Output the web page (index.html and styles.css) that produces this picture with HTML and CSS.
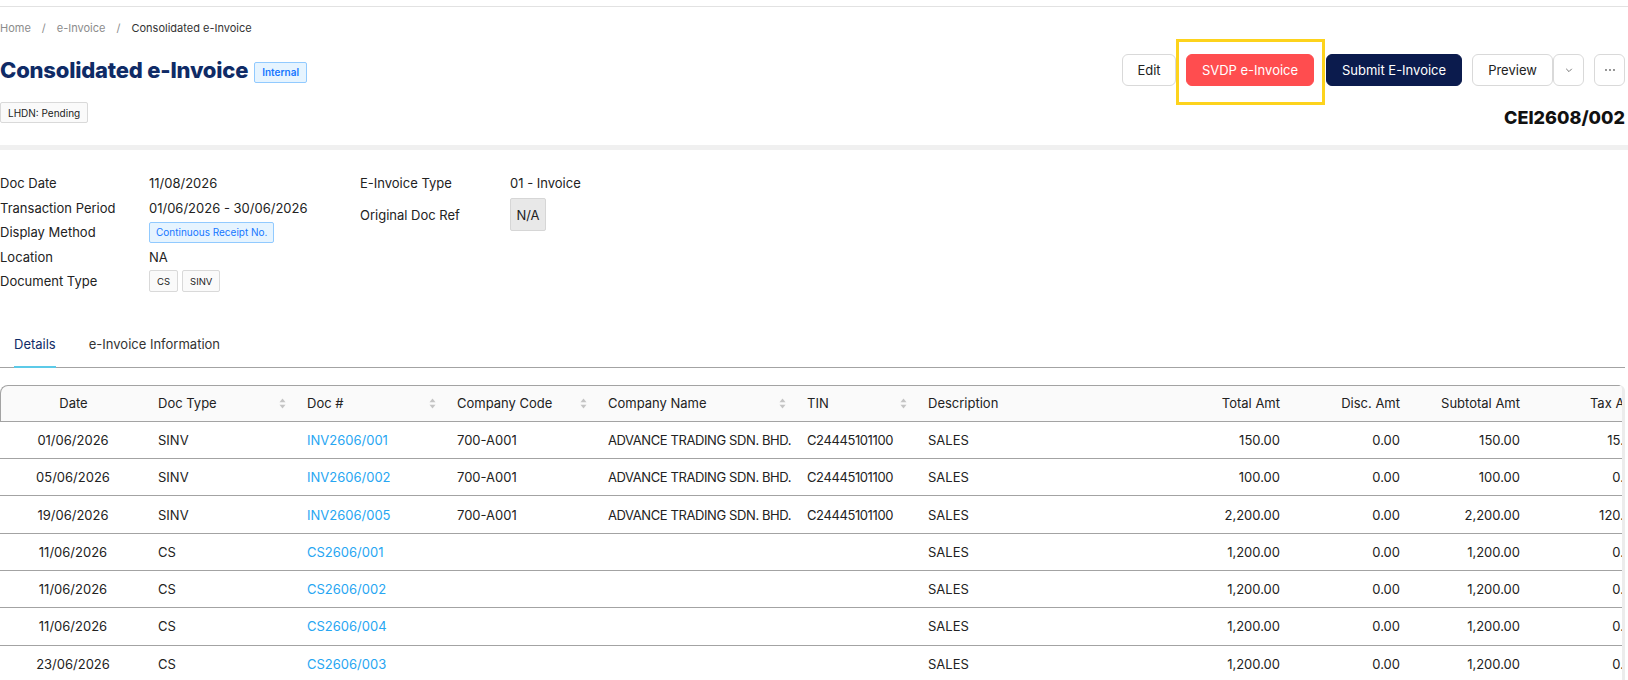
FILE: index.html
```html
<!DOCTYPE html>
<html>
<head>
    <meta charset="UTF-8">
    <title>Consolidated e-Invoice</title>
    <link rel="stylesheet" href="styles.css">
</head>
<body>
    <div class="topbar"></div>
    <div class="page">
        <div class="breadcrumb">
            <span>Home</span><span class="sep">/</span><span>e-Invoice</span><span class="sep">/</span><span class="current">Consolidated e-Invoice</span>
        </div>

        <div class="header">
            <div class="header-left">
                <div class="title-row">
                    <h1 class="title">Consolidated e-Invoice</h1>
                    <span class="tag tag-blue">Internal</span>
                </div>
                <span class="tag tag-gray status">LHDN: Pending</span>
            </div>
            <div class="header-right">
                <div class="actions">
                    <button class="btn btn-edit">Edit</button>
                    <button class="btn btn-danger highlight">SVDP e-Invoice</button>
                    <button class="btn btn-primary">Submit E-Invoice</button>
                    <div class="btn-group">
                        <button class="btn btn-preview">Preview</button>
                        <button class="btn btn-icon">
                            <svg width="10" height="10" viewBox="0 0 10 10"><polyline points="2.2,3.8 5,6.6 7.8,3.8" fill="none" stroke="#666" stroke-width="0.9"/></svg>
                        </button>
                    </div>
                    <button class="btn btn-icon btn-more">
                        <svg width="12" height="4" viewBox="0 0 12 4"><circle cx="2" cy="2" r="0.9" fill="#666"/><circle cx="6" cy="2" r="0.9" fill="#666"/><circle cx="10" cy="2" r="0.9" fill="#666"/></svg>
                    </button>
                </div>
                <div class="doc-no">CEI2608/002</div>
            </div>
        </div>
    </div>

    <div class="band"></div>

    <div class="page">
        <div class="info">
            <div class="info-col info-left">
                <div class="label">Doc Date</div><div class="value">11/08/2026</div>
                <div class="label">Transaction Period</div><div class="value">01/06/2026 - 30/06/2026</div>
                <div class="label">Display Method</div><div class="value"><span class="tag tag-blue tag-light">Continuous Receipt No.</span></div>
                <div class="label">Location</div><div class="value">NA</div>
                <div class="label">Document Type</div><div class="value"><span class="tag tag-gray tag-doc">CS</span><span class="tag tag-gray tag-doc">SINV</span></div>
            </div>
            <div class="info-col info-right">
                <div class="label">E-Invoice Type</div><div class="value">01 - Invoice</div>
                <div class="label">Original Doc Ref</div><div class="value"><span class="ref-box">N/A</span></div>
            </div>
        </div>

        <div class="tabs">
            <div class="tab active">Details</div>
            <div class="tab">e-Invoice Information</div>
        </div>

        <div class="table-wrap">
            <table class="grid">
                <colgroup>
                    <col style="width:146px"><col style="width:149px"><col style="width:150px"><col style="width:151px">
                    <col style="width:199px"><col style="width:121px"><col style="width:256px"><col style="width:120px">
                    <col style="width:120px"><col style="width:120px"><col style="width:120px">
                </colgroup>
                <thead>
                    <tr>
                        <th class="center">Date</th>
                        <th><div class="th-sort">Doc Type<svg width="7" height="11" viewBox="0 0 7 11"><path d="M3.5 0.5L6.5 4.2H0.5Z" fill="#c4c4c4"/><path d="M3.5 10.5L6.5 6.8H0.5Z" fill="#c4c4c4"/></svg></div></th>
                        <th><div class="th-sort">Doc #<svg width="7" height="11" viewBox="0 0 7 11"><path d="M3.5 0.5L6.5 4.2H0.5Z" fill="#c4c4c4"/><path d="M3.5 10.5L6.5 6.8H0.5Z" fill="#c4c4c4"/></svg></div></th>
                        <th><div class="th-sort">Company Code<svg width="7" height="11" viewBox="0 0 7 11"><path d="M3.5 0.5L6.5 4.2H0.5Z" fill="#c4c4c4"/><path d="M3.5 10.5L6.5 6.8H0.5Z" fill="#c4c4c4"/></svg></div></th>
                        <th><div class="th-sort">Company Name<svg width="7" height="11" viewBox="0 0 7 11"><path d="M3.5 0.5L6.5 4.2H0.5Z" fill="#c4c4c4"/><path d="M3.5 10.5L6.5 6.8H0.5Z" fill="#c4c4c4"/></svg></div></th>
                        <th><div class="th-sort">TIN<svg width="7" height="11" viewBox="0 0 7 11"><path d="M3.5 0.5L6.5 4.2H0.5Z" fill="#c4c4c4"/><path d="M3.5 10.5L6.5 6.8H0.5Z" fill="#c4c4c4"/></svg></div></th>
                        <th>Description</th>
                        <th class="num">Total Amt</th>
                        <th class="num">Disc. Amt</th>
                        <th class="num">Subtotal Amt</th>
                        <th class="num">Tax Amt</th>
                    </tr>
                </thead>
                <tbody>
                    <tr><td class="center">01/06/2026</td><td>SINV</td><td><a href="#">INV2606/001</a></td><td>700-A001</td><td class="caps">ADVANCE TRADING SDN. BHD.</td><td class="caps">C24445101100</td><td>SALES</td><td class="num">150.00</td><td class="num">0.00</td><td class="num">150.00</td><td class="num">15.00</td></tr>
                    <tr><td class="center">05/06/2026</td><td>SINV</td><td><a href="#">INV2606/002</a></td><td>700-A001</td><td class="caps">ADVANCE TRADING SDN. BHD.</td><td class="caps">C24445101100</td><td>SALES</td><td class="num">100.00</td><td class="num">0.00</td><td class="num">100.00</td><td class="num">0.00</td></tr>
                    <tr><td class="center">19/06/2026</td><td>SINV</td><td><a href="#">INV2606/005</a></td><td>700-A001</td><td class="caps">ADVANCE TRADING SDN. BHD.</td><td class="caps">C24445101100</td><td>SALES</td><td class="num">2,200.00</td><td class="num">0.00</td><td class="num">2,200.00</td><td class="num">120.00</td></tr>
                    <tr><td class="center">11/06/2026</td><td>CS</td><td><a href="#">CS2606/001</a></td><td></td><td></td><td></td><td>SALES</td><td class="num">1,200.00</td><td class="num">0.00</td><td class="num">1,200.00</td><td class="num">0.00</td></tr>
                    <tr><td class="center">11/06/2026</td><td>CS</td><td><a href="#">CS2606/002</a></td><td></td><td></td><td></td><td>SALES</td><td class="num">1,200.00</td><td class="num">0.00</td><td class="num">1,200.00</td><td class="num">0.00</td></tr>
                    <tr><td class="center">11/06/2026</td><td>CS</td><td><a href="#">CS2606/004</a></td><td></td><td></td><td></td><td>SALES</td><td class="num">1,200.00</td><td class="num">0.00</td><td class="num">1,200.00</td><td class="num">0.00</td></tr>
                    <tr><td class="center">23/06/2026</td><td>CS</td><td><a href="#">CS2606/003</a></td><td></td><td></td><td></td><td>SALES</td><td class="num">1,200.00</td><td class="num">0.00</td><td class="num">1,200.00</td><td class="num">0.00</td></tr>
                </tbody>
            </table>
        </div>
    </div>
</body>
</html>
```

FILE: styles.css
```css
body {
    margin: 0;
    font-family: Inter, "Noto Sans", sans-serif;
    font-size: 13px;
    color: #222;
    background: #fff;
}

.topbar {
    height: 6px;
    border-bottom: 1px solid #e2e2e2;
}

.page {
    padding-right: 3px;
}

/* breadcrumb */
.breadcrumb {
    margin-top: 13px;
    font-size: 11px;
    line-height: 16px;
    color: #8c8c8c;
}
.breadcrumb .sep {
    margin: 0 11px;
}
.breadcrumb .current {
    color: #333;
}

/* header */
.header {
    display: flex;
    justify-content: space-between;
    height: 109px;
}
.header-left {
    padding-top: 19px;
}
.title-row {
    display: flex;
    align-items: center;
    height: 30px;
}
.title {
    margin: 0;
    font-size: 22px;
    line-height: 30px;
    font-weight: 800;
    color: #0f2b66;
    letter-spacing: -0.2px;
}

.tag {
    display: inline-flex;
    align-items: center;
    justify-content: center;
    box-sizing: border-box;
    border-radius: 2px;
    font-size: 10px;
}
.tag-blue {
    margin-left: 6px;
    height: 21px;
    padding: 0 7px;
    background: #e6f4ff;
    border: 1px solid #91caff;
    color: #1677ff;
    font-weight: 600;
    margin-top: 4px;
}
.tag-gray {
    background: #fafafa;
    border: 1px solid #d9d9d9;
    color: #222;
}
.status {
    margin-top: 17px;
    height: 21px;
    padding: 0 7px;
}

.header-right {
    padding-top: 18px;
}
.actions {
    display: flex;
    align-items: center;
    gap: 10px;
}
.btn {
    box-sizing: border-box;
    height: 32px;
    border-radius: 6px;
    border: 1px solid #d9d9d9;
    background: #fff;
    font-family: inherit;
    font-size: 13px;
    color: #222;
    padding: 0;
    cursor: pointer;
}
.btn-edit {
    width: 54px;
}
.btn-danger {
    width: 128px;
    background: #ff4d4f;
    border-color: #ff4d4f;
    color: #fff;
}
.btn-primary {
    width: 136px;
    background: #0b1b4d;
    border-color: #0b1b4d;
    color: #fff;
    margin-left: 2px;
}
.btn-group {
    display: flex;
}
.btn-preview {
    width: 81px;
}
.btn-icon {
    width: 31px;
    display: inline-flex;
    align-items: center;
    justify-content: center;
}

/* annotation box around the SVDP button */
.highlight {
    position: relative;
}
.highlight::after {
    content: "";
    position: absolute;
    left: -11px;
    right: -12px;
    top: -16px;
    bottom: -20px;
    border: 3px solid #fdd31c;
    pointer-events: none;
}

.doc-no {
    margin-top: 21px;
    text-align: right;
    font-size: 18px;
    line-height: 22px;
    font-weight: 800;
    color: #111;
}

.band {
    height: 5px;
    background: #f0f0f0;
}

/* info */
.info {
    display: flex;
    padding-top: 21px;
}
.info-col {
    display: grid;
    align-items: center;
    grid-auto-rows: 24.5px;
}
.info-left {
    width: 360px;
    grid-template-columns: 149px auto;
}
.info-right {
    grid-template-columns: 150px auto;
    grid-template-rows: 24.5px 38px;
}
.value {
    display: flex;
    gap: 4px;
}
.tag-light {
    margin: 0;
    height: 21px;
    padding: 0 6px;
    font-weight: 400;
    color: #1677ff;
}
.tag-doc {
    height: 22px;
    padding: 0 7px;
    font-size: 9.5px;
}
.ref-box {
    display: inline-flex;
    align-items: center;
    justify-content: center;
    width: 36px;
    height: 33px;
    box-sizing: border-box;
    background: #e8e8e8;
    border: 1px solid #d6d6d6;
    border-radius: 2px;
}

/* tabs */
.tabs {
    display: flex;
    margin-top: 40px;
    border-bottom: 1px solid #a3a3a3;
}
.tab {
    line-height: 20px;
    padding-bottom: 12px;
    border-bottom: 2px solid transparent;
    margin-bottom: -1px;
    margin-left: 33px;
    color: #333;
}
.tab:first-child {
    margin-left: 14px;
}
.tab.active {
    color: #0f2b66;
    border-bottom-color: #5ccae8;
}

/* table */
.table-wrap {
    margin-top: 17px;
    overflow: hidden;
    border-right: 3px solid #ececec;
    border-top-right-radius: 6px;
}
.grid {
    table-layout: fixed;
    width: 1652px;
    border-collapse: separate;
    border-spacing: 0;
}
.grid th,
.grid td {
    height: 37.3px;
    box-sizing: border-box;
    padding: 0 12px;
    border-bottom: 1px solid #a3a3a3;
    text-align: left;
    white-space: nowrap;
}
.grid th {
    background: #fafafa;
    border-top: 1px solid #a3a3a3;
    font-weight: 400;
    color: #222;
}
.grid th:first-child {
    border-left: 1px solid #a3a3a3;
    border-top-left-radius: 8px;
}
.grid .center {
    text-align: center;
}
.grid .num {
    text-align: right;
}
.grid .caps {
    letter-spacing: -0.4px;
}
.th-sort {
    display: flex;
    align-items: center;
    justify-content: space-between;
    margin-right: -3px;
}
.grid a {
    color: #27a6f2;
    text-decoration: none;
}
```
